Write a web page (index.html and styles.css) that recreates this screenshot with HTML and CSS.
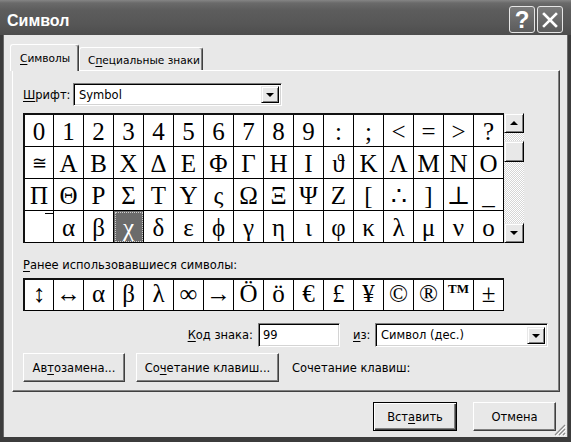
FILE: index.html
```html
<!DOCTYPE html>
<html lang="ru">
<head>
<meta charset="utf-8">
<title>Символ</title>
<link rel="stylesheet" href="styles.css">
</head>
<body>
<div class="window">
  <div class="titlebar">
    <span class="title">Символ</span>
    <div class="tb-btns">
      <span class="tb-btn help">?</span>
      <span class="tb-btn close"><svg width="16" height="16" viewBox="0 0 16 16"><path d="M2 2 L14 14 M14 2 L2 14" stroke="#fff" stroke-width="2.6" stroke-linecap="square" fill="none"/></svg></span>
    </div>
  </div>
  <div class="client">
    <div class="tabs">
      <div class="tab active"><span><u>С</u>имволы</span></div>
      <div class="tab">С<u>п</u>ециальные знаки</div>
    </div>
    <div class="panel">
      <div class="font-row">
        <span class="font-label"><u>Ш</u>рифт:</span>
        <div class="combo font-combo"><span class="combo-text">Symbol</span><span class="drop"><i class="tri-down"></i></span></div>
      </div>
      <div class="chart">
        <div class="grid main">
          <div class="c">0</div><div class="c">1</div><div class="c">2</div><div class="c">3</div><div class="c">4</div><div class="c">5</div><div class="c">6</div><div class="c">7</div><div class="c">8</div><div class="c">9</div><div class="c">:</div><div class="c">;</div><div class="c">&lt;</div><div class="c">=</div><div class="c">&gt;</div><div class="c">?</div>
          <div class="c small">≅</div><div class="c">Α</div><div class="c">Β</div><div class="c">Χ</div><div class="c">Δ</div><div class="c">Ε</div><div class="c">Φ</div><div class="c">Γ</div><div class="c">Η</div><div class="c">Ι</div><div class="c">ϑ</div><div class="c">Κ</div><div class="c">Λ</div><div class="c">Μ</div><div class="c">Ν</div><div class="c">Ο</div>
          <div class="c">Π</div><div class="c">Θ</div><div class="c">Ρ</div><div class="c">Σ</div><div class="c">Τ</div><div class="c">Υ</div><div class="c">ς</div><div class="c">Ω</div><div class="c">Ξ</div><div class="c">Ψ</div><div class="c">Ζ</div><div class="c">[</div><div class="c">∴</div><div class="c">]</div><div class="c">⊥</div><div class="c">_</div>
          <div class="c"><span class="radicalex"></span></div><div class="c">α</div><div class="c">β</div><div class="c sel">χ</div><div class="c">δ</div><div class="c">ε</div><div class="c">ϕ</div><div class="c">γ</div><div class="c">η</div><div class="c">ι</div><div class="c">φ</div><div class="c">κ</div><div class="c">λ</div><div class="c">μ</div><div class="c">ν</div><div class="c">ο</div>
        </div>
        <div class="scrollbar">
          <div class="sb-btn"><i class="tri-up"></i></div>
          <div class="sb-track"><div class="sb-thumb"></div></div>
          <div class="sb-btn"><i class="tri-down"></i></div>
        </div>
      </div>
      <div class="recent-label"><u>Р</u>анее использовавшиеся символы:</div>
      <div class="grid recent">
        <div class="c">↕</div><div class="c">↔</div><div class="c">α</div><div class="c">β</div><div class="c">λ</div><div class="c">∞</div><div class="c">→</div><div class="c">Ö</div><div class="c">ö</div><div class="c">€</div><div class="c">£</div><div class="c">¥</div><div class="c">©</div><div class="c">®</div><div class="c tm">TM</div><div class="c">±</div>
      </div>
      <div class="code-row">
        <span class="code-label"><u>К</u>од знака:</span>
        <div class="field"><span>99</span></div>
        <span class="from-label"><u>и</u>з:</span>
        <div class="combo from-combo"><span class="combo-text">Символ (дес.)</span><span class="drop"><i class="tri-down"></i></span></div>
      </div>
      <div class="btn-row">
        <button class="btn auto">Ав<u>т</u>озамена...</button>
        <button class="btn keys">Со<u>ч</u>етание клавиш...</button>
        <span class="keys-label">Сочетание клавиш:</span>
      </div>
    </div>
    <div class="footer">
      <button class="btn default insert">Вст<u>а</u>вить</button>
      <button class="btn cancel">Отмена</button>
    </div>
    <svg class="grip" width="12" height="12" viewBox="0 0 12 12">
      <path d="M11 1 L1 11 M11 5 L5 11 M11 9 L9 11" stroke="#8a8a8a" stroke-width="1.2" fill="none"/>
      <path d="M12 2 L2 12 M12 6 L6 12 M12 10 L10 12" stroke="#fff" stroke-width="1" fill="none"/>
    </svg>
  </div>
</div>
</body>
</html>
```
FILE: styles.css
```css
* { box-sizing: border-box; }
html, body { margin: 0; padding: 0; }
body {
  width: 571px; height: 442px; overflow: hidden;
  background: #3a3a3a;
  font-family: "DejaVu Sans", sans-serif;
  font-size: 11.5px;
  color: #000;
}
u { text-decoration: underline; text-underline-offset: 2px; }

.window {
  width: 571px; height: 442px;
  display: flex; flex-direction: column;
  background: #3c3c3c;
}
.titlebar {
  height: 35px; flex: none;
  display: flex; align-items: center;
  padding: 4px 8px 0 7px;
  background: linear-gradient(#858585 0, #6a6a6a 3px, #5d5d5d 10px, #565656 70%, #4d4d4d 100%);
}
.title {
  flex: 1;
  color: #fff;
  font: bold 16px "Liberation Sans", sans-serif;
  margin-top: 3px;
}
.tb-btns { display: flex; gap: 2px; }
.tb-btn {
  width: 26px; height: 27px;
  border: 1px solid #e6e6e6;
  border-radius: 3px;
  background: linear-gradient(#7a7a7a, #5b5b5b);
  display: flex; align-items: center; justify-content: center;
  color: #fff;
}
.help { font: bold 24px/1 "Liberation Sans", sans-serif; }

.client {
  flex: 1;
  margin: 0 4px 5px;
  background: #e8e8e8;
  position: relative;
  padding-top: 9px;
  display: flex; flex-direction: column;
  box-shadow: -1px 0 #6a6a6a, 1px 0 #6a6a6a;
}

.tabs {
  display: flex; align-items: flex-end;
  height: 26px;
  padding-left: 6px;
  position: relative; z-index: 1;
  font-size: 10.6px;
}
.tab {
  height: 23px;
  width: 124px;
  padding: 2px 0 0 8px;
  border: 1px solid;
  border-color: #fff #404040 transparent #fff;
  border-bottom: none;
  border-radius: 3px 3px 0 0;
  box-shadow: inset -1px 0 #808080;
  background: #e8e8e8;
  display: flex; align-items: center;
  white-space: nowrap;
}
.tab.active {
  height: 27px;
  width: 69px;
  margin-bottom: -1px;
  padding: 0 0 0 9px;
}

.panel {
  flex: none;
  margin: 0 7px 0 8px;
  border: 1px solid;
  border-color: #fff #404040 #404040 #fff;
  box-shadow: inset -1px -1px #808080;
  padding: 12px 0 9px 10px;
  display: flex; flex-direction: column; align-items: flex-start;
}

.font-row { display: flex; align-items: center; height: 23px; }
.font-label { width: 50px; }

.combo {
  height: 23px;
  background: #fff;
  border: 1px solid;
  border-color: #808080 #fff #fff #808080;
  box-shadow: inset 1px 1px #000, inset -1px -1px #d4d4d4;
  display: flex; align-items: center;
  padding: 2px;
}
.font-combo { width: 209px; }
.combo-text { flex: 1; padding-left: 3px; }
.drop {
  width: 18px; height: 17px;
  background: #e8e8e8;
  border: 1px solid;
  border-color: #e8e8e8 #000 #000 #e8e8e8;
  box-shadow: inset 1px 1px #fff, inset -1px -1px #808080;
  display: flex; align-items: center; justify-content: center;
  padding-top: 1px;
}
.tri-down {
  width: 0; height: 0;
  border-left: 4px solid transparent;
  border-right: 4px solid transparent;
  border-top: 4px solid #000;
}
.tri-up {
  width: 0; height: 0;
  border-left: 4px solid transparent;
  border-right: 4px solid transparent;
  border-bottom: 4px solid #000;
}

.chart { display: flex; margin-top: 7px; }
.grid {
  display: grid;
  grid-template-columns: 29px repeat(15, 30px);
  border-top: 2px solid #111;
  border-left: 2px solid #111;
  background: #fff;
}
.main { grid-template-rows: repeat(4, 32px); }
.recent { grid-template-rows: 31px; }
.c {
  border-right: 1px solid #000;
  border-bottom: 1px solid #000;
  background: #fff;
  text-align: center;
  font: 25px/33px "Liberation Serif", "DejaVu Serif", serif;
  overflow: hidden;
  white-space: nowrap;
}
.recent .c { line-height: 27px; }
.c.small { font-size: 18px; }
.c.tm { font: bold 13px/18px "Liberation Serif", serif; }
.c.sel {
  background: #6b6b6b;
  color: #fff;
  outline: 1px dotted #d0d0d0;
  outline-offset: -2px;
}
.radicalex {
  display: block;
  width: 8px; height: 1px;
  background: #000;
  margin: 2px 0 0 auto;
}

.scrollbar {
  width: 20px; height: 130px;
  display: flex; flex-direction: column;
  background: repeating-conic-gradient(#fff 0 25%, #d6d6d6 0 50%) 0 0 / 2px 2px;
}
.sb-btn, .sb-thumb {
  background: #e8e8e8;
  border: 1px solid;
  border-color: #e8e8e8 #000 #000 #e8e8e8;
  box-shadow: inset 1px 1px #fff, inset -1px -1px #808080;
}
.sb-btn {
  height: 20px; flex: none;
  display: flex; align-items: center; justify-content: center;
}
.sb-track { flex: 1; }
.sb-thumb { margin-top: 8px; height: 21px; }

.recent-label { margin-top: 14px; line-height: 16px; margin-bottom: 5px; }

.code-row {
  margin-top: 12px;
  height: 24px;
  display: flex; align-items: center;
}
.code-label { width: 230px; text-align: right; margin-right: 5px; }
.field {
  width: 82px; height: 24px;
  background: #fff;
  border: 1px solid;
  border-color: #808080 #fff #fff #808080;
  box-shadow: inset 1px 1px #000, inset -1px -1px #d4d4d4;
  display: flex; align-items: center;
  padding-left: 4px;
}
.from-label { margin-left: 13px; width: 22px; }
.from-combo { width: 173px; height: 24px; }

.btn-row {
  margin-top: 6px;
  height: 29px;
  display: flex; align-items: center;
}
.btn {
  height: 29px;
  margin: 0; padding: 0;
  font: inherit; color: #000;
  background: #e8e8e8;
  border: 1px solid;
  border-color: #fff #404040 #404040 #fff;
  box-shadow: inset -1px -1px #808080;
  display: flex; align-items: center; justify-content: center;
}
.auto { width: 102px; }
.keys { width: 143px; margin-left: 11px; }
.keys-label { margin-left: 13px; }

.footer {
  margin-top: 10px;
  display: flex; justify-content: flex-end;
  gap: 16px;
  padding-right: 11px;
}
.insert { width: 84px; }
.cancel { width: 83px; }
.btn.default {
  border-color: #000;
  box-shadow: inset 1px 1px #fff, inset -1px -1px #404040, inset -2px -2px #808080;
}

.grip { position: absolute; right: 1px; bottom: 1px; }
```
